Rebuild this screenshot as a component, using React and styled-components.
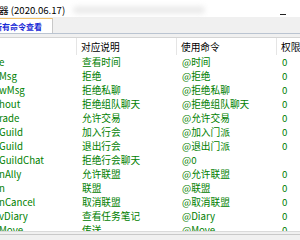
import React from "react";
import styled, { createGlobalStyle } from "styled-components";

const GlobalStyle = createGlobalStyle`
  html, body {
    margin: 0;
    padding: 0;
    width: 300px;
    height: 240px;
    overflow: hidden;
    background: #f0f0f0;
    font-family: "Noto Sans CJK SC", "Noto Sans", sans-serif;
  }
`;

const Window = styled.div`
  width: 300px;
  height: 240px;
  display: flex;
  flex-direction: column;
  background: #f0f0f0;
  overflow: hidden;
`;

const TitleBar = styled.div`
  height: 17px;
  flex: none;
  display: flex;
  align-items: center;
  background: #ffffff;
`;

const Title = styled.span`
  margin-left: -1px;
  margin-top: 2px;
  font-size: 9.6px;
  color: #000;
  white-space: nowrap;
`;

const Blurred = styled.div`
  width: 132px;
  height: 8px;
  margin-left: 8px;
  margin-top: 3px;
  border-radius: 4px;
  background: #dcdcdc;
  opacity: 0.55;
  filter: blur(2.5px);
`;

const MinGlyph = styled.div`
  width: 6px;
  height: 1px;
  margin-left: auto;
  margin-right: 14px;
  align-self: flex-end;
  margin-bottom: 2px;
  background: #222;
`;

const TabStrip = styled.div`
  height: 16px;
  flex: none;
  display: flex;
  align-items: flex-end;
  border-bottom: 1px solid #bac4d1;
  background: #f0f0f0;
`;

const Tab = styled.div`
  height: 15px;
  margin-left: -6px;
  padding: 0 10px 0 0;
  display: flex;
  align-items: center;
  background: #ffffff;
  border-top: 1px solid #f2c26a;
  border-right: 1px solid #c8c8c8;
  box-sizing: border-box;
  font-size: 8px;
  font-weight: bold;
  color: #1a2bd6;
  white-space: nowrap;
`;

const Panel = styled.div`
  padding-top: 3px;
  display: flex;
  flex-direction: column;
  flex: 1;
`;

const ListView = styled.div`
  height: 195px;
  flex: none;
  box-sizing: border-box;
  background: #ffffff;
  border-top: 1px solid #d4d4d4;
  border-bottom: 1px solid #dadada;
  overflow: hidden;
`;

const Columns = `
  display: grid;
  grid-template-columns: 77px 100px 100px 100px;
  width: 377px;
`;

const HeaderRow = styled.div`
  ${Columns}
  height: 17px;
  background: #ffffff;
`;

const HeaderCell = styled.div`
  display: flex;
  align-items: center;
  padding-left: 4px;
  border-right: 1px solid #e5e5e5;
  font-size: 9.7px;
  color: #000;
  white-space: nowrap;
`;

const Row = styled.div`
  ${Columns}
  height: 14px;
`;

const Cell = styled.div`
  display: flex;
  align-items: center;
  padding-left: ${(p) => (p.$first ? "0" : "5px")};
  margin-left: ${(p) => (p.$first ? "-1px" : "0")};
  font-size: 9.7px;
  color: #008000;
  white-space: nowrap;
  overflow: hidden;
`;

const Footer = styled.div`
  margin-top: 2px;
  flex: 1;
  border-top: 1px solid #c9c9c9;
  background: #f0f0f0;
`;

const rows = [
  ["e", "查看时间", "@时间", "0"],
  ["Msg", "拒绝", "@拒绝", "0"],
  ["wMsg", "拒绝私聊", "@拒绝私聊", "0"],
  ["hout", "拒绝组队聊天", "@拒绝组队聊天", "0"],
  ["rade", "允许交易", "@允许交易", "0"],
  ["Guild", "加入行会", "@加入门派", "0"],
  ["Guild", "退出行会", "@退出门派", "0"],
  ["GuildChat", "拒绝行会聊天", "@0", ""],
  ["nAlly", "允许联盟", "@允许联盟", "0"],
  ["n", "联盟", "@联盟", "0"],
  ["nCancel", "取消联盟", "@取消联盟", "0"],
  ["vDiary", "查看任务笔记", "@Diary", "0"],
  ["Move", "传送", "@Move", "0"],
];

export default function App() {
  return (
    <>
      <GlobalStyle />
      <Window>
        <TitleBar>
          <Title>器 (2020.06.17)</Title>
          <Blurred />
          <MinGlyph />
        </TitleBar>
        <TabStrip>
          <Tab>所有命令查看</Tab>
        </TabStrip>
        <Panel>
          <ListView>
            <HeaderRow>
              <HeaderCell />
              <HeaderCell>对应说明</HeaderCell>
              <HeaderCell>使用命令</HeaderCell>
              <HeaderCell>权限</HeaderCell>
            </HeaderRow>
            {rows.map((r, i) => (
              <Row key={i}>
                <Cell $first>{r[0]}</Cell>
                <Cell>{r[1]}</Cell>
                <Cell>{r[2]}</Cell>
                <Cell>{r[3]}</Cell>
              </Row>
            ))}
          </ListView>
          <Footer />
        </Panel>
      </Window>
    </>
  );
}
